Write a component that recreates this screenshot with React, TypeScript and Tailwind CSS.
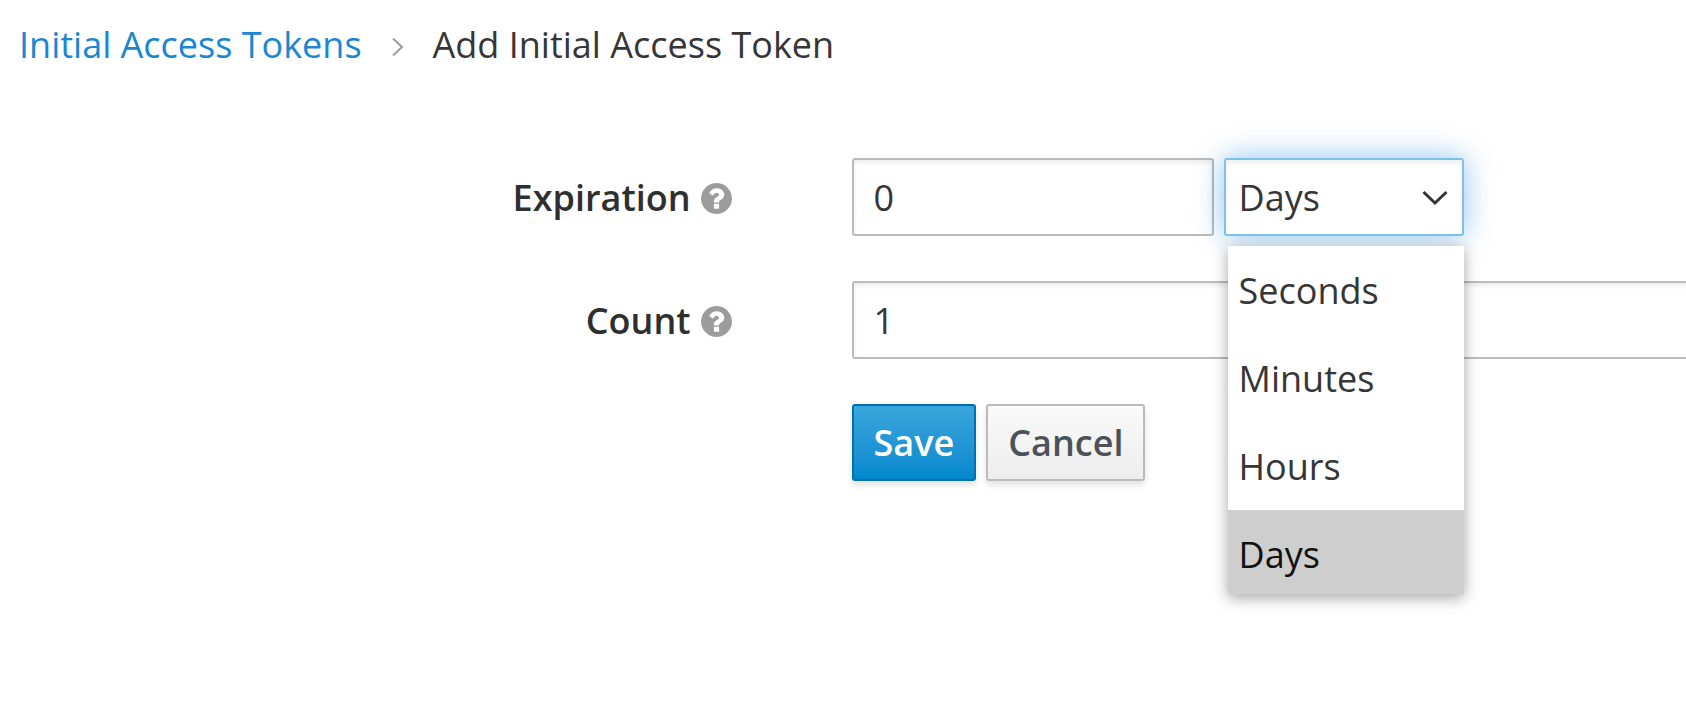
import { useState } from "react";

const units = ["Seconds", "Minutes", "Hours", "Days"];

function HelpIcon() {
  return (
    <svg viewBox="128 128 1536 1536" className="size-[31px] shrink-0 fill-[#9c9c9c]" aria-hidden="true">
      <path d="M1024 1376v-192q0-14-9-23t-23-9h-192q-14 0-23 9t-9 23v192q0 14 9 23t23 9h192q14 0 23-9t9-23zm256-672q0-88-55.5-163t-138.5-116-170-41q-243 0-371 213-15 24 8 42l132 100q7 6 19 6 16 0 25-12 53-68 86-92 34-24 86-24 48 0 85.5 26t37.5 59q0 38-20 61t-68 45q-63 28-115.5 86.5t-52.5 125.5v36q0 14 9 23t23 9h192q14 0 23-9t9-23q0-19 21.5-49.5t54.5-49.5q32-18 49-28.5t46-35 44.5-48 28-60.5 12.5-81zm384 192q0 209-103 385.5t-279.5 279.5-385.5 103-385.5-103-279.5-279.5-103-385.5 103-385.5 279.5-279.5 385.5-103 385.5 103 279.5 279.5 103 385.5z" />
    </svg>
  );
}

function FieldLabel({ htmlFor, text }: { htmlFor: string; text: string }) {
  return (
    <div className="flex items-center justify-end gap-[10px] pt-[2px]">
      <label htmlFor={htmlFor} className="font-semibold text-[#2f2f2f]">
        {text}
      </label>
      <HelpIcon />
    </div>
  );
}

export default function App() {
  const [unit, setUnit] = useState("Days");
  const [expiration, setExpiration] = useState("0");
  const [count, setCount] = useState("1");

  return (
    <main className="min-h-screen overflow-x-hidden bg-white font-['Open_Sans',sans-serif] text-[36px] leading-[48px] text-[#363636]">
      <nav aria-label="Breadcrumb" className="px-[19px] pt-[21px]">
        <ol className="flex items-center">
          <li>
            <a href="#tokens" className="text-[#1a87d2]">
              Initial Access Tokens
            </a>
          </li>
          <li aria-current="page" className="flex items-center">
            <svg viewBox="0 0 12 20" className="mr-[29px] ml-[30px] mt-1 h-5 w-3 fill-none stroke-[#9c9c9c] stroke-2" aria-hidden="true">
              <path d="M1 1.5 10 10l-9 8.500" />
            </svg>
            Add Initial Access Token
          </li>
        </ol>
      </nav>

      <form className="mt-[89px] flex flex-col gap-[45px]" onSubmit={(e) => e.preventDefault()}>
        <div className="grid grid-cols-[732fr_835fr] gap-x-[120px]">
          <FieldLabel htmlFor="expiration" text="Expiration" />
          <div className="flex gap-[10px]">
            <input
              id="expiration"
              value={expiration}
              onChange={(e) => setExpiration(e.target.value)}
              className="h-[78px] w-[362px] rounded-[3px] border-2 border-[#bbb] bg-white px-5 shadow-[inset_0_3px_4px_rgba(3,3,3,0.07)]"
            />
            <div className="relative">
              <select
                aria-label="Expiration unit"
                value={unit}
                onChange={(e) => setUnit(e.target.value)}
                className="h-[78px] w-[240px] appearance-none rounded-[3px] border-2 border-[#7dc3e8] bg-white px-[13px] pt-px shadow-[inset_0_3px_4px_rgba(3,3,3,0.07),0_0_30px_rgba(0,120,215,0.45)] outline-none"
              >
                {units.map((u) => (
                  <option key={u}>{u}</option>
                ))}
              </select>
              <svg
                viewBox="0 0 26 16"
                className="pointer-events-none absolute top-8 right-4 h-4 w-[26px] fill-none stroke-[#333] stroke-3"
                aria-hidden="true"
              >
                <path d="M1.500 2 13 13 24.500 2" />
              </svg>
              <ul
                role="listbox"
                aria-label="Expiration unit options"
                className="absolute top-[88px] right-0 left-1 z-10 bg-white shadow-[0_4px_14px_rgba(0,0,0,0.35)]"
              >
                {units.map((u) => (
                  <li
                    key={u}
                    role="option"
                    aria-selected={u === unit}
                    onClick={() => setUnit(u)}
                    className="px-[11px] pt-[21px] pb-[19px] last:pb-[15px] aria-selected:bg-[#cecece] aria-selected:text-[#111]"
                  >
                    {u}
                  </li>
                ))}
              </ul>
            </div>
          </div>
        </div>

        <div className="grid grid-cols-[732fr_835fr] gap-x-[120px]">
          <FieldLabel htmlFor="count" text="Count" />
          <input
            id="count"
            value={count}
            onChange={(e) => setCount(e.target.value)}
            className="-mr-5 h-[78px] rounded-[3px] border-2 border-[#bbb] bg-white px-5 shadow-[inset_0_3px_4px_rgba(3,3,3,0.07)]"
          />
        </div>

        <div className="grid grid-cols-[732fr_835fr] gap-x-[120px]">
          <div className="col-start-2 flex gap-[10px]">
            <button
              type="submit"
              className="h-[77px] rounded-[3px] border-2 border-[#0071b0] bg-linear-to-b from-[#39a5dc] to-[#0088ce] px-5 font-semibold text-white shadow-[0_4px_6px_rgba(3,3,3,0.12)]"
            >
              Save
            </button>
            <button
              type="button"
              className="h-[77px] rounded-[3px] border-2 border-[#bbb] bg-linear-to-b from-[#fafafa] to-[#ededed] px-5 font-semibold text-[#4d5258] shadow-[0_4px_6px_rgba(3,3,3,0.12)]"
            >
              Cancel
            </button>
          </div>
        </div>
      </form>
    </main>
  );
}
